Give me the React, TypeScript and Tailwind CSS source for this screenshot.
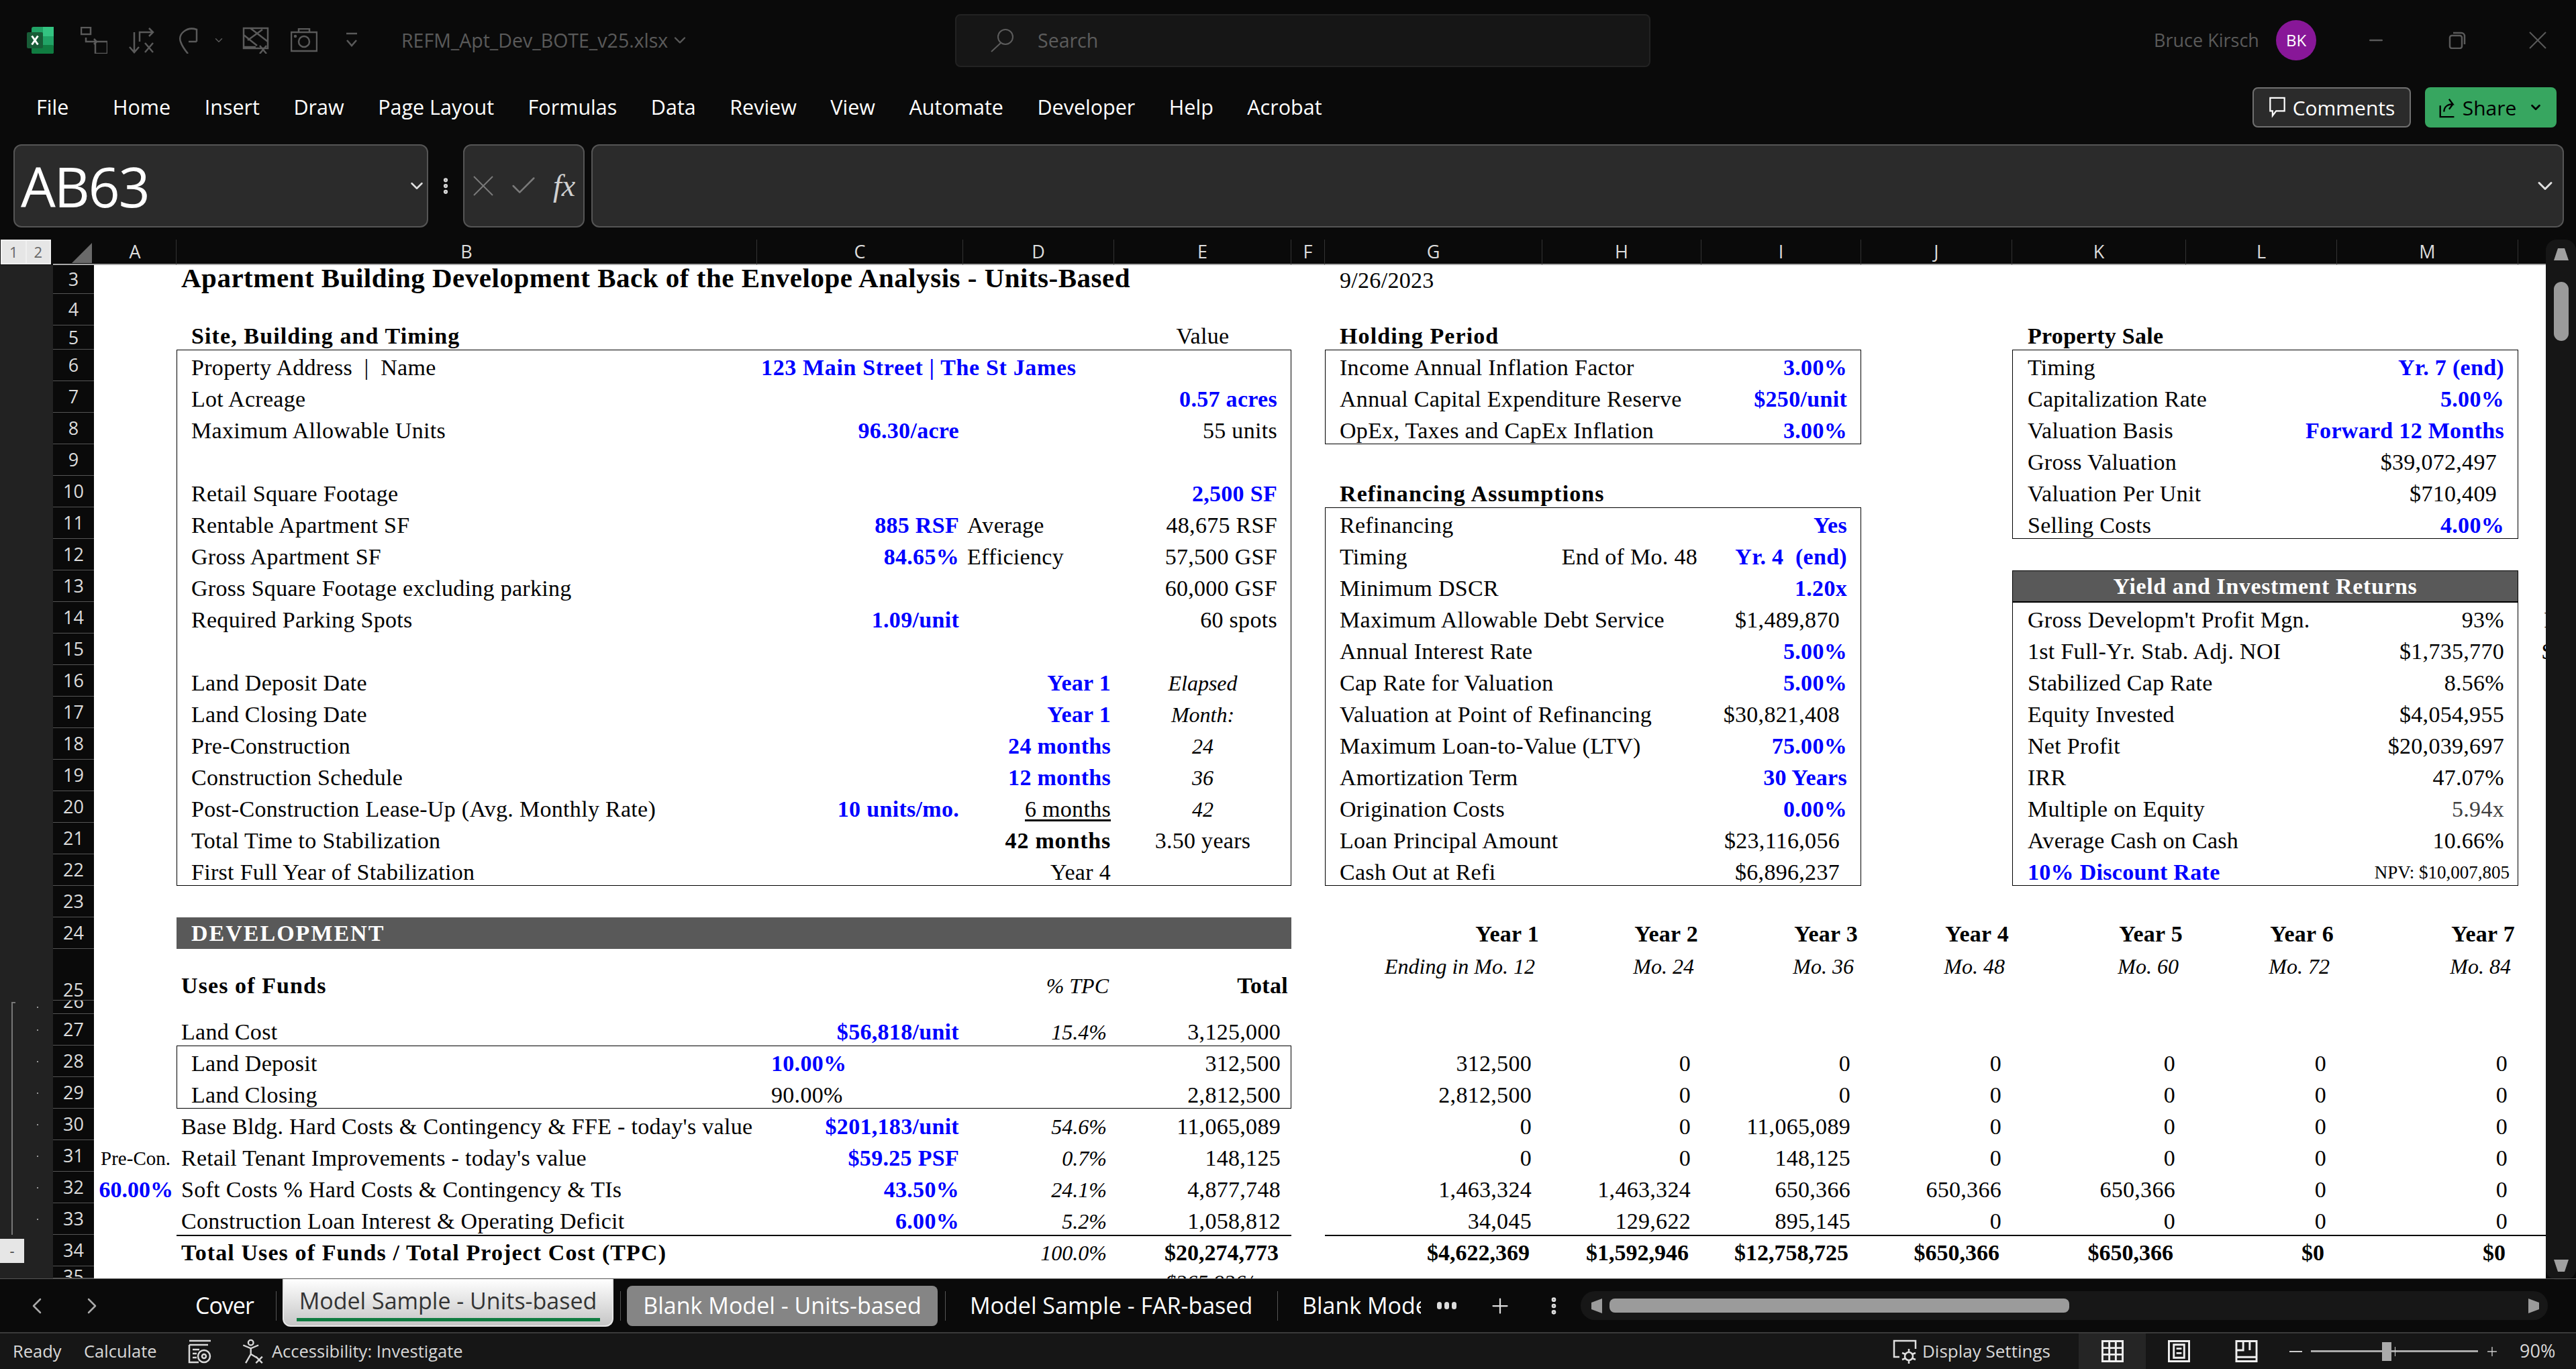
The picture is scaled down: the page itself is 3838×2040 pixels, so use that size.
import { ChevronDown, ChevronLeft, ChevronRight, Plus, Check, MoreVertical, Minus } from 'lucide-react';

// sheet column letters -> grid column line (gutter = 1, row numbers = 2)
const COL: Record<string, number> = { A: 3, B: 4, C: 5, D: 6, E: 7, F: 8, G: 9, H: 10, I: 11, J: 12, K: 13, L: 14, M: 15, N: 16 };
const LETTERS = ['A', 'B', 'C', 'D', 'E', 'F', 'G', 'H', 'I', 'J', 'K', 'L', 'M'];

const ROWS = [3, 4, 5, 6, 7, 8, 9, 10, 11, 12, 13, 14, 15, 16, 17, 18, 19, 20, 21, 22, 23, 24, 25, 26, 27, 28, 29, 30, 31, 32, 33, 34, 35];

const BLUE = 'text-[#0000ff] font-bold';
const ITAL = 'italic text-[32px] tracking-normal';
const HEAD = 'font-bold tracking-[1.1px]';

type C = { r: number; c: string; t: string; k?: string };

function Cell({ r, c, t, k = '' }: C) {
  return (
    <div className={`flex items-end whitespace-nowrap leading-[40px] ${k}`} style={{ gridRow: r - 1, gridColumn: COL[c] }}>
      {t}
    </div>
  );
}

function Box({ from, to, c1, c2, k = 'border border-black' }: { from: number; to: number; c1: string; c2: string; k?: string }) {
  return <div className={k} style={{ gridRow: `${from - 1} / ${to}`, gridColumn: `${COL[c1]} / ${COL[c2] + 1}` }} />;
}

const cells: C[] = [];
const add = (r: number, c: string, t: string, k = '') => cells.push({ r, c, t, k });

// top left block
add(3, 'B', 'Apartment Building Development Back of the Envelope Analysis - Units-Based', 'pl-[7px] pb-[4px] font-bold text-[41px] tracking-[0.5px]');
add(3, 'G', '9/26/2023', 'pl-[22px]');
add(5, 'B', 'Site, Building and Timing', `pl-[22px] ${HEAD}`);
add(5, 'E', 'Value', 'justify-center');
const leftLabels: [number, string][] = [
  [6, 'Property Address\u00a0 |\u00a0 Name'], [7, 'Lot Acreage'], [8, 'Maximum Allowable Units'], [10, 'Retail Square Footage'],
  [11, 'Rentable Apartment SF'], [12, 'Gross Apartment SF'], [13, 'Gross Square Footage excluding parking'], [14, 'Required Parking Spots'],
  [16, 'Land Deposit Date'], [17, 'Land Closing Date'], [18, 'Pre-Construction'], [19, 'Construction Schedule'],
  [20, 'Post-Construction Lease-Up (Avg. Monthly Rate)'], [21, 'Total Time to Stabilization'], [22, 'First Full Year of Stabilization'],
];
leftLabels.forEach(([r, t]) => add(r, 'B', t, 'pl-[22px]'));
add(6, 'C', '123 Main Street | The St James', `pl-[6px] ${BLUE} tracking-[0.65px]`);
const cR = 'justify-end pr-[6px]';
const dR = 'justify-end pr-[5px]';
const eR = 'justify-end pr-[21px]';
add(7, 'E', '0.57 acres', `${eR} ${BLUE}`);
add(8, 'C', '96.30/acre', `${cR} ${BLUE}`);
add(8, 'E', '55 units', eR);
add(10, 'E', '2,500 SF', `${eR} ${BLUE}`);
add(11, 'C', '885 RSF', `${cR} ${BLUE}`);
add(11, 'D', 'Average', 'pl-[6px]');
add(11, 'E', '48,675 RSF', eR);
add(12, 'C', '84.65%', `${cR} ${BLUE}`);
add(12, 'D', 'Efficiency', 'pl-[6px]');
add(12, 'E', '57,500 GSF', eR);
add(13, 'E', '60,000 GSF', eR);
add(14, 'C', '1.09/unit', `${cR} ${BLUE}`);
add(14, 'E', '60 spots', eR);
add(16, 'D', 'Year 1', `${dR} ${BLUE}`);
add(17, 'D', 'Year 1', `${dR} ${BLUE}`);
add(18, 'D', '24 months', `${dR} ${BLUE}`);
add(19, 'D', '12 months', `${dR} ${BLUE}`);
add(20, 'C', '10 units/mo.', `${cR} ${BLUE}`);
add(20, 'D', '6 months', `${dR} underline underline-offset-4`);
add(21, 'D', '42 months', `${dR} font-bold tracking-[0.8px]`);
add(22, 'D', 'Year 4', dR);
add(16, 'E', 'Elapsed', `justify-center ${ITAL}`);
add(17, 'E', 'Month:', `justify-center ${ITAL}`);
add(18, 'E', '24', `justify-center ${ITAL}`);
add(19, 'E', '36', `justify-center ${ITAL}`);
add(20, 'E', '42', `justify-center ${ITAL}`);
add(21, 'E', '3.50 years', 'justify-center');

// holding period and refinancing
const iB = `justify-end pr-[21px] ${BLUE}`;
const iK = 'justify-end pr-[32px]';
add(5, 'G', 'Holding Period', `pl-[22px] ${HEAD}`);
add(10, 'G', 'Refinancing Assumptions', `pl-[22px] ${HEAD}`);
const mid: [number, string, string, string][] = [
  [6, 'Income Annual Inflation Factor', '3.00%', iB],
  [7, 'Annual Capital Expenditure Reserve', '$250/unit', iB],
  [8, 'OpEx, Taxes and CapEx Inflation', '3.00%', iB],
  [11, 'Refinancing', 'Yes', iB],
  [12, 'Timing', 'Yr. 4\u00a0 (end)', iB],
  [13, 'Minimum DSCR', '1.20x', iB],
  [14, 'Maximum Allowable Debt Service', '$1,489,870', iK],
  [15, 'Annual Interest Rate', '5.00%', iB],
  [16, 'Cap Rate for Valuation', '5.00%', iB],
  [17, 'Valuation at Point of Refinancing', '$30,821,408', iK],
  [18, 'Maximum Loan-to-Value (LTV)', '75.00%', iB],
  [19, 'Amortization Term', '30 Years', iB],
  [20, 'Origination Costs', '0.00%', iB],
  [21, 'Loan Principal Amount', '$23,116,056', iK],
  [22, 'Cash Out at Refi', '$6,896,237', iK],
];
mid.forEach(([r, l, v, k]) => {
  add(r, 'G', l, 'pl-[22px]');
  add(r, 'I', v, k);
});
add(12, 'H', 'End of Mo. 48', 'justify-end pr-[6px]');

// property sale and returns
add(5, 'K', 'Property Sale', 'pl-[23px] font-bold');
const right: [number, string, string, string][] = [
  [6, 'Timing', 'Yr. 7 (end)', iB],
  [7, 'Capitalization Rate', '5.00%', iB],
  [8, 'Valuation Basis', 'Forward 12 Months', iB],
  [9, 'Gross Valuation', '$39,072,497', iK],
  [10, 'Valuation Per Unit', '$710,409', iK],
  [11, 'Selling Costs', '4.00%', iB],
  [14, "Gross Developm't Profit Mgn.", '93%', eR],
  [15, '1st Full-Yr. Stab. Adj. NOI', '$1,735,770', eR],
  [16, 'Stabilized Cap Rate', '8.56%', eR],
  [17, 'Equity Invested', '$4,054,955', eR],
  [18, 'Net Profit', '$20,039,697', eR],
  [19, 'IRR', '47.07%', eR],
  [20, 'Multiple on Equity', '5.94x', `${eR} text-[#404040]`],
  [21, 'Average Cash on Cash', '10.66%', eR],
];
right.forEach(([r, l, v, k]) => {
  add(r, 'K', l, 'pl-[23px]');
  add(r, 'M', v, k);
});
add(22, 'K', '10% Discount Rate', `pl-[23px] ${BLUE}`);
add(22, 'M', 'NPV: $10,007,805', 'justify-end pr-[13px] text-[27px] tracking-normal');
add(14, 'N', 'I', 'pl-[38px]');
add(15, 'N', '$', 'pl-[35px]');

// development header and uses of funds
add(24, 'B', 'DEVELOPMENT', 'pl-[22px] pb-[3px] font-bold tracking-[2px] text-white');
add(25, 'B', 'Uses of Funds', `pl-[7px] pb-[2px] ${HEAD}`);
add(25, 'D', '% TPC', `justify-end pr-[8px] pb-[2px] ${ITAL}`);
add(25, 'E', 'Total', 'justify-end pr-[5px] pb-[2px] font-bold');
const yearCols = ['G', 'H', 'I', 'J', 'K', 'L', 'M'];
['Ending in Mo. 12', 'Mo. 24', 'Mo. 36', 'Mo. 48', 'Mo. 60', 'Mo. 72', 'Mo. 84'].forEach((t, i) => {
  add(24, yearCols[i], `Year ${i + 1}`, 'justify-end pr-[5px] pb-[2px] font-bold');
  add(25, yearCols[i], t, `justify-end pr-[11px] self-start mt-[6px] ${ITAL}`);
});

type Line = { r: number; label: string; pl: string; c?: string; d: string; e: string; y: string[] };
const lines: Line[] = [
  { r: 27, label: 'Land Cost', pl: 'pl-[7px]', c: '$56,818/unit', d: '15.4%', e: '3,125,000', y: [] },
  { r: 28, label: 'Land Deposit', pl: 'pl-[22px]', d: '', e: '312,500', y: ['312,500', '0', '0', '0', '0', '0', '0'] },
  { r: 29, label: 'Land Closing', pl: 'pl-[22px]', d: '', e: '2,812,500', y: ['2,812,500', '0', '0', '0', '0', '0', '0'] },
  { r: 30, label: "Base Bldg. Hard Costs & Contingency & FFE - today's value", pl: 'pl-[7px]', c: '$201,183/unit', d: '54.6%', e: '11,065,089', y: ['0', '0', '11,065,089', '0', '0', '0', '0'] },
  { r: 31, label: "Retail Tenant Improvements - today's value", pl: 'pl-[7px]', c: '$59.25 PSF', d: '0.7%', e: '148,125', y: ['0', '0', '148,125', '0', '0', '0', '0'] },
  { r: 32, label: 'Soft Costs % Hard Costs & Contingency & TIs', pl: 'pl-[7px]', c: '43.50%', d: '24.1%', e: '4,877,748', y: ['1,463,324', '1,463,324', '650,366', '650,366', '650,366', '0', '0'] },
  { r: 33, label: 'Construction Loan Interest & Operating Deficit', pl: 'pl-[7px]', c: '6.00%', d: '5.2%', e: '1,058,812', y: ['34,045', '129,622', '895,145', '0', '0', '0', '0'] },
];
lines.forEach((l) => {
  add(l.r, 'B', l.label, l.pl);
  if (l.c) add(l.r, 'C', l.c, `${cR} ${BLUE}`);
  if (l.d) add(l.r, 'D', l.d, `justify-end pr-[11px] ${ITAL}`);
  add(l.r, 'E', l.e, 'justify-end pr-[16px]');
  l.y.forEach((v, i) => add(l.r, yearCols[i], v, 'justify-end pr-[16px]'));
});
add(28, 'C', '10.00%', `pl-[21px] ${BLUE}`);
add(29, 'C', '90.00%', 'pl-[21px]');
add(31, 'A', 'Pre-Con.', 'justify-end pr-[9px] text-[29px] tracking-normal');
add(32, 'A', '60.00%', `justify-end pr-[5px] ${BLUE} tracking-normal`);
add(34, 'B', 'Total Uses of Funds / Total Project Cost (TPC)', `pl-[7px] ${HEAD}`);
add(34, 'D', '100.0%', `justify-end pr-[11px] ${ITAL}`);
add(34, 'E', '$20,274,773', 'justify-end pr-[19px] font-bold tracking-normal');
['$4,622,369', '$1,592,946', '$12,758,725', '$650,366', '$650,366', '$0', '$0'].forEach((v, i) => add(34, yearCols[i], v, 'justify-end pr-[19px] font-bold tracking-normal'));

function TitleBar() {
  return (
    <div className="flex h-[120px] items-center text-[27px] text-[#5a5a5a]">
      <svg viewBox="0 0 40 40" className="ml-[40px] h-[40px] w-[40px]">
        <rect x="7" y="0" width="33" height="40" rx="3" fill="#21a366" />
        <rect x="24" y="0" width="16" height="14" fill="#33c481" />
        <rect x="7" y="27" width="33" height="13" rx="2" fill="#107c41" />
        <rect x="0" y="8" width="24" height="24" rx="2" fill="#185c37" />
        <path d="M7.5 13.5l9 13M16.5 13.5l-9 13" stroke="#fff" strokeWidth="3" />
      </svg>
      <svg viewBox="0 0 40 40" fill="none" stroke="#5a5a5a" strokeWidth="2.5" className="ml-[40px] h-[40px] w-[40px]">
        <path d="M1 1h14v10H1zM22 22h18v18H22zM8 16v6h16l-4-4M24 22l-4 4" />
      </svg>
      <svg viewBox="0 0 40 40" fill="none" stroke="#5a5a5a" strokeWidth="2.5" className="ml-[32px] h-[40px] w-[40px]">
        <path d="M8 8v30M1 30l7 8 7-8M30 2l6 6-6 6M36 8H16v14M24 24l12 14M36 24L24 38" />
      </svg>
      <svg viewBox="0 0 36 40" fill="none" stroke="#5a5a5a" strokeWidth="2.5" className="ml-[33px] h-[40px] w-[36px]">
        <path d="M28 22H16M28 22V4C14-1 0 10 4 22c2 6 6 12 11 18" />
      </svg>
      <ChevronDown size={18} color="#5a5a5a" className="ml-[16px]" />
      <svg viewBox="0 0 40 40" fill="none" stroke="#5a5a5a" strokeWidth="2.5" className="ml-[26px] h-[40px] w-[40px]">
        <path d="M2 2h36v30H2zM2 12l20 16M12 2l26 20M8 20L30 4M2 30h18M26 28l10 12M36 28L26 40" />
      </svg>
      <svg viewBox="0 0 40 36" fill="none" stroke="#5a5a5a" strokeWidth="2.5" className="ml-[32px] h-[36px] w-[40px]">
        <path d="M1 6h38v28H1zM12 6V1h16v5" />
        <circle cx="20" cy="20" r="8" />
        <circle cx="7" cy="12" r="1" />
      </svg>
      <svg viewBox="0 0 18 24" fill="none" stroke="#5a5a5a" strokeWidth="2.5" className="ml-[42px] h-[24px] w-[18px]">
        <path d="M1 2h16M2 12l7 8 7-8" />
      </svg>
      <span className="ml-[65px] w-[391px] whitespace-nowrap text-[28.5px]">REFM_Apt_Dev_BOTE_v25.xlsx</span>
      <ChevronDown size={28} color="#5a5a5a" className="ml-[10px]" />
      <div className="ml-[396px] flex h-[79px] w-[1036px] items-center rounded-lg border-2 border-[#222222] bg-[#161616] pl-[50px] text-[28.5px] text-[#5c5c5c]">
        <svg viewBox="0 0 36 36" fill="none" stroke="#5c5c5c" strokeWidth="2" className="h-[36px] w-[36px]">
          <circle cx="23" cy="13" r="11" />
          <path d="M16 22L2 35" />
        </svg>
        <span className="ml-[35px]">Search</span>
      </div>
      <span className="ml-[750px] w-[159px] whitespace-nowrap">Bruce Kirsch</span>
      <div className="ml-[23px] flex h-[60px] w-[60px] items-center justify-center rounded-full bg-[#881798] text-[24px] text-white">BK</div>
      <Minus size={30} color="#5a5a5a" className="ml-[74px]" />
      <svg viewBox="0 0 26 26" fill="none" stroke="#5a5a5a" strokeWidth="2.5" className="ml-[93px] h-[26px] w-[26px]">
        <rect x="2" y="6" width="18" height="19" rx="3" />
        <path d="M7 2h12a5 5 0 0 1 5 5v12" />
      </svg>
      <svg viewBox="0 0 26 26" fill="none" stroke="#5a5a5a" strokeWidth="2" className="ml-[94px] h-[26px] w-[26px]">
        <path d="M1 1l24 24M25 1L1 25" />
      </svg>
    </div>
  );
}

const MENU = ['Home', 'Insert', 'Draw', 'Page Layout', 'Formulas', 'Data', 'Review', 'View', 'Automate', 'Developer', 'Help', 'Acrobat'];

function MenuBar() {
  return (
    <div className="flex h-[80px] items-center text-[30.5px] text-white">
      <span className="ml-[54px] mr-[66px] w-[48px]">File</span>
      <div className="flex gap-[50.5px]">
        {MENU.map((m) => (
          <span key={m}>{m}</span>
        ))}
      </div>
      <div className="ml-auto mr-[29px] flex items-center gap-[21px] text-[30px]">
        <div className="flex h-[60px] w-[236px] items-center justify-center gap-[10px] rounded-lg border-2 border-[#707070] bg-[#2b2b2b]">
          <svg viewBox="0 0 28 36" fill="none" stroke="#fff" strokeWidth="2.5" className="h-[32px] w-[26px]">
            <path d="M2 2h24v22H12l-6 8v-8H2z" />
          </svg>
          Comments
        </div>
        <div className="flex h-[60px] w-[196px] items-center justify-center gap-[8px] rounded-lg bg-[#37a660] text-black">
          <svg viewBox="0 0 28 34" fill="none" stroke="#000" strokeWidth="2.5" className="h-[32px] w-[28px]">
            <path d="M2 14v18h22M8 24c0-8 6-12 14-12l-6-8M22 12l-6 8" />
          </svg>
          Share
          <ChevronDown size={22} color="#000" className="ml-[10px]" strokeWidth={3} />
        </div>
      </div>
    </div>
  );
}

function FormulaBar() {
  return (
    <div className="mt-[15px] flex h-[124px] text-white">
      <div className="ml-[20px] flex w-[618px] items-center rounded-xl border-2 border-[#555555] bg-[#2b2b2b] pl-[9px] text-[82px] tracking-[-2px]">
        AB63
        <ChevronDown size={30} color="#e0e0e0" className="ml-auto" />
      </div>
      <MoreVertical size={30} color="#d8d8d8" className="mx-[11px] self-center" strokeWidth={3} />
      <div className="flex w-[181px] items-center rounded-xl border-2 border-[#555555] bg-[#2b2b2b] pl-[13px]">
        <svg viewBox="0 0 30 30" fill="none" stroke="#7a7a7a" strokeWidth="2" className="h-[30px] w-[30px]">
          <path d="M1 1l28 28M29 1L1 29" />
        </svg>
        <Check size={46} color="#7a7a7a" strokeWidth={1.3} className="ml-[22px]" />
        <span className="ml-[21px] font-['Liberation_Serif',serif] text-[46px] italic leading-none text-[#d0d0d0]">fx</span>
      </div>
      <div className="ml-[10px] mr-[18px] flex flex-1 items-center justify-end rounded-xl border-2 border-[#555555] bg-[#2b2b2b] pr-[8px]">
        <ChevronDown size={36} color="#e0e0e0" />
      </div>
    </div>
  );
}

function Sheet() {
  return (
    <div className="mt-[18px] flex h-[1548px]">
      <div className="grid h-full w-[3793px] grid-cols-[79px_61px_123px_865px_307px_225px_264px_50px_324px_237px_238px_225px_259px_225px_270px_41px] grid-rows-[38px_43px_47px_36px_repeat(19,47px)_77px_20px_repeat(8,47px)_18px] overflow-hidden font-['Liberation_Serif',serif] text-[34px] tracking-[0.3px] text-black">
        {/* background areas */}
        <div className="col-start-1 row-span-full row-start-2 bg-[#222222]" />
        <div className="col-start-3 col-end-[-1] row-start-2 row-end-[-1] bg-white" />

        {/* outline controls */}
        <div className="col-start-1 row-start-1 mb-[1px] ml-[1px] mr-[3px] flex border-2 border-[#f0f0f0] bg-[#e6e6e6] font-['Open_Sans',sans-serif] text-[22px] tracking-normal text-[#666666]">
          <span className="flex flex-1 items-center justify-center border-r-2 border-[#f0f0f0]">1</span>
          <span className="flex flex-1 items-center justify-center">2</span>
        </div>
        <div className="col-start-2 row-start-1 border-b-2 border-[#a8a8a8] bg-[#0a0a0a] pl-[28px] pt-[5px]">
          <svg viewBox="0 0 30 30" className="h-[30px] w-[30px]">
            <path d="M30 0v30H0z" fill="#6a6a6a" />
          </svg>
        </div>
        <div className="col-start-1 row-start-[25] row-end-[33] ml-[17px] mt-[2px] w-[6px] border-l-2 border-t-2 border-[#777777]" />
        {[26, 27, 28, 29, 30, 31, 32, 33].map((r) => (
          <div key={r} className="col-start-1 flex items-center justify-center pl-[32px]" style={{ gridRow: r - 1 }}>
            <span className="h-[2px] w-[2px] bg-[#999999]" />
          </div>
        ))}
        <div className="col-start-1 row-start-[33] flex h-[36px] w-[36px] items-center justify-center self-center bg-[#e6e6e6] font-['Open_Sans',sans-serif] text-[22px] tracking-normal text-[#444444]">
          -
        </div>

        {/* column letters */}
        {LETTERS.map((l) => (
          <div key={l} className="row-start-1 flex items-center justify-center border-r border-b-2 border-r-[#333333] border-b-[#a8a8a8] bg-[#0a0a0a] font-['Open_Sans',sans-serif] text-[27px] tracking-normal text-[#dddddd]" style={{ gridColumn: COL[l] }}>
            {l}
          </div>
        ))}
        <div className="col-start-[16] row-start-1 border-b-2 border-[#a8a8a8] bg-[#0a0a0a]" />

        {/* row numbers */}
        {ROWS.map((n) => (
          <div key={n} className={`col-start-2 flex justify-center overflow-hidden border-b border-[#555555] bg-[#0a0a0a] font-['Open_Sans',sans-serif] text-[27px] leading-[30px] tracking-normal text-[#dddddd] ${n === 25 ? 'items-end' : n === 35 ? 'items-start' : n === 26 ? 'items-start' : 'items-center'}`} style={{ gridRow: n - 1 }}>
            <span className={n === 26 ? '-mt-[14px]' : ''}>{n}</span>
          </div>
        ))}

        {/* shaded bars and borders */}
        <Box from={24} to={24} c1="B" c2="E" k="bg-[#595959]" />
        <Box from={13} to={13} c1="K" c2="M" k="border border-black bg-[#595959]" />
        <Box from={6} to={22} c1="B" c2="E" />
        <Box from={6} to={8} c1="G" c2="I" />
        <Box from={11} to={22} c1="G" c2="I" />
        <Box from={6} to={11} c1="K" c2="M" />
        <Box from={14} to={22} c1="K" c2="M" />
        <Box from={28} to={29} c1="B" c2="E" />
        <Box from={34} to={34} c1="B" c2="E" k="border-t-2 border-black" />
        <Box from={34} to={34} c1="G" c2="N" k="border-t-2 border-black" />

        <div className="row-start-[12] flex items-center justify-center font-bold tracking-[0.6px] text-white" style={{ gridColumn: `${COL.K} / ${COL.N}` }}>
          Yield and Investment Returns
        </div>

        {cells.map((x, i) => (
          <Cell key={i} {...x} />
        ))}
        <div className="col-start-7 row-start-[34] flex justify-end overflow-hidden pr-[59px] pt-[8px] text-[32px] italic leading-[32px] tracking-normal">$365,936/</div>
      </div>

      {/* vertical scrollbar */}
      <div className="flex h-[1550px] w-[45px] flex-col items-center rounded-t-2xl rounded-b-2xl bg-[#161616] pt-[13px]">
        <svg viewBox="0 0 22 18" className="h-[18px] w-[22px]">
          <path d="M6 0h10l6 18H0z" fill="#a0a0a0" />
        </svg>
        <div className="mt-[32px] h-[88px] w-[22px] rounded-[11px] bg-[#9b9b9b]" />
        <svg viewBox="0 0 22 18" className="mt-auto mb-[12px] h-[18px] w-[22px]">
          <path d="M0 0h22l-6 18H6z" fill="#a0a0a0" />
        </svg>
      </div>
    </div>
  );
}

function TabBar() {
  return (
    <div className="flex h-[82px] items-center border-t border-[#555555] border-b-2 border-b-[#3a3a3a] font-['Open_Sans',sans-serif] text-[34px] text-white">
      <ChevronLeft size={40} color="#aaaaaa" className="ml-[35px]" strokeWidth={1.5} />
      <ChevronRight size={40} color="#aaaaaa" className="ml-[42px]" strokeWidth={1.5} />
      <span className="ml-[134px] w-[88px] whitespace-nowrap tracking-[-1px]">Cover</span>
      <span className="ml-[32px] h-[44px] w-[1px] bg-[#555555]" />
      <div className="ml-[9px] flex h-[71px] w-[493px] flex-col items-center self-start rounded-b-xl border-2 border-t-0 border-[#e8e8e8] bg-linear-to-b from-white to-[#c6c6c6] pt-[13px] text-[#333333]">
        <span className="whitespace-nowrap leading-[38px]">Model Sample - Units-based</span>
        <span className="mt-[7px] h-[5px] w-[452px] bg-[#107c41]" />
      </div>
      <span className="ml-[10px] h-[44px] w-[1px] bg-[#555555]" />
      <div className="ml-[9px] flex h-[60px] w-[463px] items-center justify-center whitespace-nowrap rounded-lg bg-[#858585]">Blank Model - Units-based</div>
      <span className="ml-[11px] h-[44px] w-[1px] bg-[#555555]" />
      <span className="ml-[36px] w-[421px] whitespace-nowrap">Model Sample - FAR-based</span>
      <span className="ml-[37px] h-[44px] w-[1px] bg-[#555555]" />
      <span className="ml-[36px] w-[177px] overflow-hidden whitespace-nowrap">Blank Model - FAR-based</span>
      <span className="ml-[24px] flex w-[29px] gap-[4px]">
        <i className="h-[11px] w-[7px] rounded-full bg-[#dddddd]" />
        <i className="h-[11px] w-[7px] rounded-full bg-[#dddddd]" />
        <i className="h-[11px] w-[7px] rounded-full bg-[#dddddd]" />
      </span>
      <Plus size={36} color="#dddddd" className="ml-[47px]" strokeWidth={1.5} />
      <MoreVertical size={32} color="#dddddd" className="ml-[46px]" strokeWidth={3} />
      <div className="ml-[24px] flex h-[43px] w-[1441px] items-center rounded-[21px] bg-[#171717] pl-[16px]">
        <svg viewBox="0 0 16 22" className="h-[22px] w-[16px]">
          <path d="M16 0v22L0 16V6z" fill="#9b9b9b" />
        </svg>
        <div className="ml-[11px] h-[21px] w-[685px] rounded-[8px] bg-[#9b9b9b]" />
        <svg viewBox="0 0 16 22" className="ml-auto mr-[13px] h-[22px] w-[16px]">
          <path d="M0 0v22l16-6V6z" fill="#9b9b9b" />
        </svg>
      </div>
    </div>
  );
}

function StatusBar() {
  return (
    <div className="flex flex-1 items-center whitespace-nowrap bg-[#161616] text-[25.5px] text-[#d8d8d8]">
      <span className="ml-[19px] w-[72px]">Ready</span>
      <span className="ml-[34px] w-[109px]">Calculate</span>
      <svg viewBox="0 0 36 36" fill="none" stroke="#d8d8d8" strokeWidth="2.5" className="ml-[46px] h-[36px] w-[36px]">
        <path d="M2 2h32M2 8h28M2 8v26h14M7 15h10M7 21h6M7 27h6" />
        <circle cx="24" cy="25" r="9" />
        <circle cx="24" cy="25" r="3" />
      </svg>
      <svg viewBox="0 0 36 40" fill="none" stroke="#d8d8d8" strokeWidth="2.5" className="ml-[44px] h-[38px] w-[35px]">
        <circle cx="14" cy="6" r="4" />
        <path d="M2 10l12 5 12-5M14 15v9L6 38M14 24l10 6M22 28l10 10M32 28L22 38" />
      </svg>
      <span className="ml-[10px] w-[283px]">Accessibility: Investigate</span>
      <svg viewBox="0 0 36 36" fill="none" stroke="#e0e0e0" strokeWidth="2.5" className="ml-[2132px] h-[36px] w-[36px]">
        <path d="M10 26H2V2h32v12" />
        <circle cx="24" cy="25" r="6" />
        <path d="M24 14v5M24 31v5M14 20l5 2M29 28l5 2M14 30l5-2M29 22l5-2" />
      </svg>
      <span className="ml-[8px] w-[189px] text-[26px]">Display Settings</span>
      <div className="ml-[44px] flex h-full w-[100px] items-center justify-center bg-[#252525]">
        <svg viewBox="0 0 34 34" fill="none" stroke="#eeeeee" strokeWidth="3" className="h-[33px] w-[33px]">
          <path d="M1.5 1.5h31v31h-31zM1.5 12h31M1.5 22h31M12 1.5v31M22 1.5v31" />
        </svg>
      </div>
      <svg viewBox="0 0 34 34" fill="none" stroke="#eeeeee" strokeWidth="3" className="ml-[32px] h-[33px] w-[35px]">
        <path d="M1.5 1.5h31v31h-31zM9 7h16v20H9zM13 13h8M13 20h8" />
      </svg>
      <svg viewBox="0 0 34 34" fill="none" stroke="#eeeeee" strokeWidth="3" className="ml-[65px] h-[33px] w-[36px]">
        <path d="M1.5 1.5h31v31h-31zM1.5 26h31M12 1.5v14H1.5M22 1.5v14" />
      </svg>
      <span className="ml-[46px] h-[2px] w-[19px] bg-[#cccccc]" />
      <div className="ml-[13px] flex h-[28px] w-[249px] items-center">
        <div className="flex h-[3px] w-full items-center bg-[#aaaaaa] pl-[106px]">
          <span className="h-[28px] w-[14px] shrink-0 bg-[#aaaaaa]" />
          <span className="ml-[5px] h-[14px] w-[1px] shrink-0 bg-[#cccccc]" />
        </div>
      </div>
      <Plus size={22} color="#cccccc" className="ml-[10px]" strokeWidth={1.5} />
      <span className="ml-[30px] text-[27px]">90%</span>
    </div>
  );
}

export default function App() {
  return (
    <div className="flex h-[2040px] w-[3838px] flex-col overflow-hidden bg-[#0a0a0a] font-['Open_Sans',sans-serif]">
      <TitleBar />
      <MenuBar />
      <FormulaBar />
      <Sheet />
      <TabBar />
      <StatusBar />
    </div>
  );
}
